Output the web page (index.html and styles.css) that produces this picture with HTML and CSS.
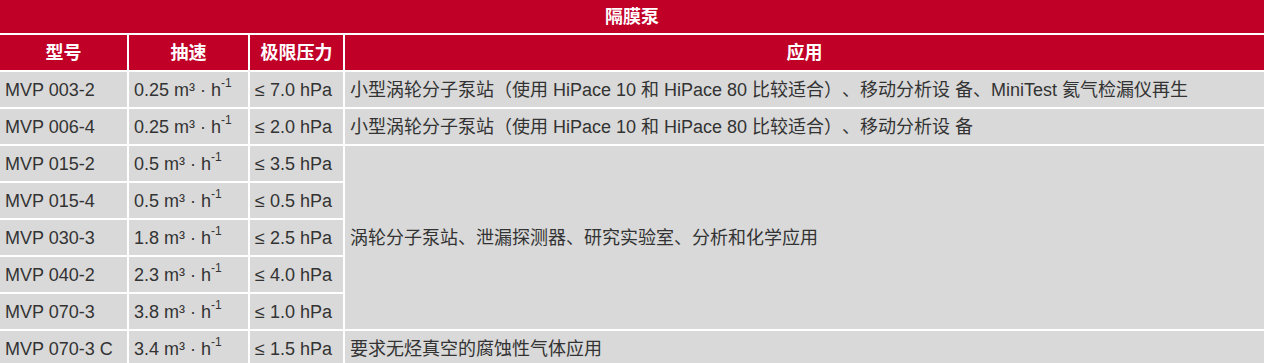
FILE: index.html
```html
<!DOCTYPE html>
<html lang="zh-CN">
<head>
<meta charset="utf-8">
<title>隔膜泵</title>
<link rel="stylesheet" href="styles.css">
</head>
<body>
<div class="table">
  <div class="title">隔膜泵</div>
  <div class="th">型号</div>
  <div class="th">抽速</div>
  <div class="th">极限压力</div>
  <div class="th">应用</div>

  <div class="td">MVP 003-2</div>
  <div class="td">0.25 m³ · h<sup>-1</sup></div>
  <div class="td">≤ 7.0 hPa</div>
  <div class="td">小型涡轮分子泵站（使用 HiPace 10 和 HiPace 80 比较适合）、移动分析设 备、MiniTest 氦气检漏仪再生</div>

  <div class="td">MVP 006-4</div>
  <div class="td">0.25 m³ · h<sup>-1</sup></div>
  <div class="td">≤ 2.0 hPa</div>
  <div class="td">小型涡轮分子泵站（使用 HiPace 10 和 HiPace 80 比较适合）、移动分析设 备</div>

  <div class="td">MVP 015-2</div>
  <div class="td">0.5 m³ · h<sup>-1</sup></div>
  <div class="td">≤ 3.5 hPa</div>
  <div class="td span5">涡轮分子泵站、泄漏探测器、研究实验室、分析和化学应用</div>

  <div class="td">MVP 015-4</div>
  <div class="td">0.5 m³ · h<sup>-1</sup></div>
  <div class="td">≤ 0.5 hPa</div>

  <div class="td">MVP 030-3</div>
  <div class="td">1.8 m³ · h<sup>-1</sup></div>
  <div class="td">≤ 2.5 hPa</div>

  <div class="td">MVP 040-2</div>
  <div class="td">2.3 m³ · h<sup>-1</sup></div>
  <div class="td">≤ 4.0 hPa</div>

  <div class="td">MVP 070-3</div>
  <div class="td">3.8 m³ · h<sup>-1</sup></div>
  <div class="td">≤ 1.0 hPa</div>

  <div class="td">MVP 070-3 C</div>
  <div class="td">3.4 m³ · h<sup>-1</sup></div>
  <div class="td">≤ 1.5 hPa</div>
  <div class="td">要求无烃真空的腐蚀性气体应用</div>
</div>
</body>
</html>
```
FILE: styles.css
```css
html, body {
  margin: 0;
  padding: 0;
  background: #ffffff;
}
body {
  width: 1264px;
  overflow: hidden;
  font-family: "Liberation Sans", Arial, "Noto Sans CJK SC", sans-serif;
  font-size: 18px;
  line-height: 20px;
  color: #333333;
  text-spacing-trim: space-all;
}
.table {
  display: grid;
  grid-template-columns: 127px 119px 93px 1fr;
  grid-template-rows: 33px repeat(9, 35px);
  gap: 2px;
}
.title {
  grid-column: 1 / -1;
  background: #c00027;
  color: #ffffff;
  font-weight: bold;
  display: flex;
  align-items: center;
  justify-content: center;
}
.th {
  background: #c00027;
  color: #ffffff;
  font-weight: bold;
  display: flex;
  align-items: center;
  justify-content: center;
}
.td {
  background: #d9d9d9;
  display: flex;
  align-items: center;
  padding: 0 5px;
  white-space: nowrap;
}
.span5 {
  grid-column: 4;
  grid-row: span 5;
}
sup {
  font-size: 12px;
  line-height: 0;
  position: relative;
  top: -7px;
  vertical-align: baseline;
}
```
